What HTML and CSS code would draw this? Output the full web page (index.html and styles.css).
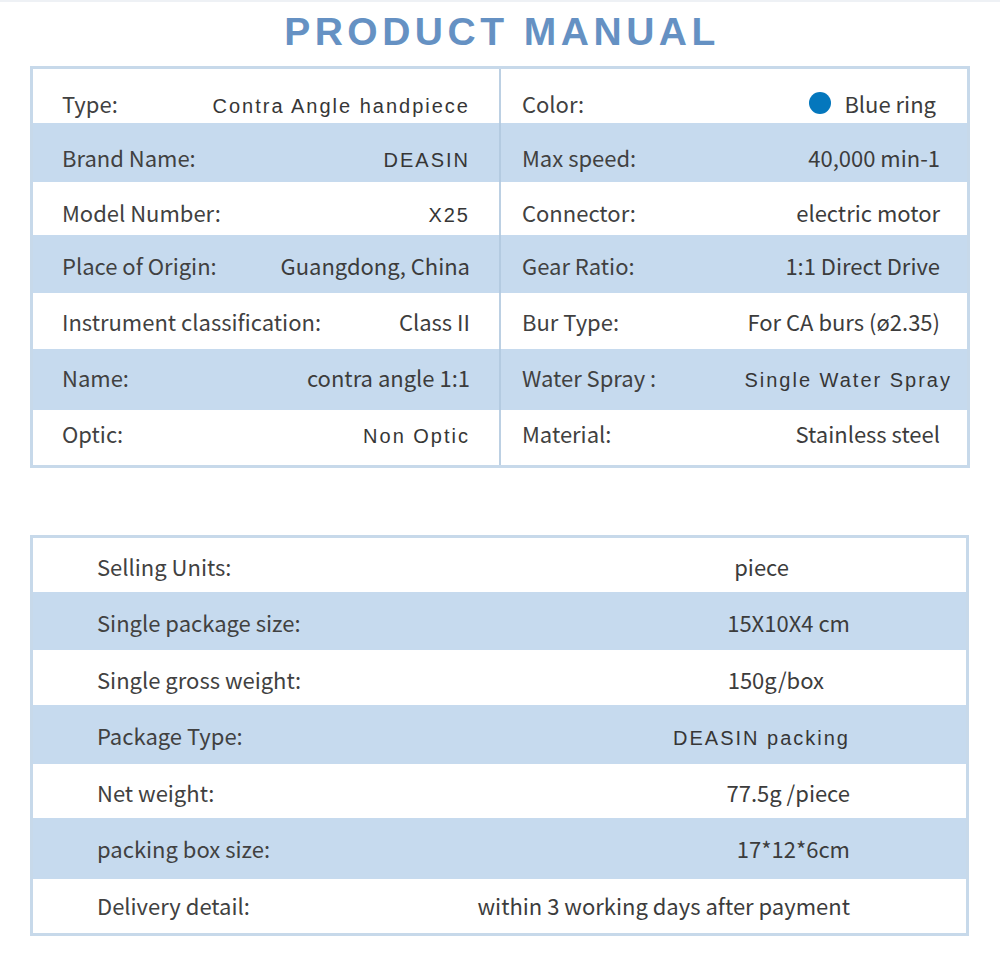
FILE: index.html
```html
<!DOCTYPE html>
<html lang="en">
<head>
<meta charset="utf-8">
<title>Product Manual</title>
<link rel="stylesheet" href="styles.css">
</head>
<body>
<h1 class="title">PRODUCT MANUAL</h1>

<div class="spec">
  <div class="row">
    <div class="cell"><span class="lbl">Type:</span><span class="val sp">Contra Angle handpiece</span></div>
    <div class="cell"><span class="lbl">Color:</span><span class="val in"><span class="dot"></span>Blue ring</span></div>
  </div>
  <div class="row">
    <div class="cell"><span class="lbl">Brand Name:</span><span class="val sp">DEASIN</span></div>
    <div class="cell"><span class="lbl">Max speed:</span><span class="val">40,000 min-1</span></div>
  </div>
  <div class="row">
    <div class="cell"><span class="lbl">Model Number:</span><span class="val sp">X25</span></div>
    <div class="cell"><span class="lbl">Connector:</span><span class="val">electric motor</span></div>
  </div>
  <div class="row">
    <div class="cell"><span class="lbl">Place of Origin:</span><span class="val">Guangdong, China</span></div>
    <div class="cell"><span class="lbl">Gear Ratio:</span><span class="val">1:1 Direct Drive</span></div>
  </div>
  <div class="row">
    <div class="cell"><span class="lbl">Instrument classification:</span><span class="val">Class II</span></div>
    <div class="cell"><span class="lbl">Bur Type:</span><span class="val">For CA burs (ø2.35)</span></div>
  </div>
  <div class="row">
    <div class="cell"><span class="lbl">Name:</span><span class="val">contra angle 1:1</span></div>
    <div class="cell"><span class="lbl">Water Spray :</span><span class="val sp out">Single Water Spray</span></div>
  </div>
  <div class="row">
    <div class="cell"><span class="lbl">Optic:</span><span class="val sp">Non Optic</span></div>
    <div class="cell"><span class="lbl">Material:</span><span class="val">Stainless steel</span></div>
  </div>
</div>

<div class="pack">
  <div class="prow"><span class="lbl">Selling Units:</span><span class="val shift-l">piece</span></div>
  <div class="prow"><span class="lbl">Single package size:</span><span class="val">15X10X4 cm</span></div>
  <div class="prow"><span class="lbl">Single gross weight:</span><span class="val shift-s">150g/box</span></div>
  <div class="prow"><span class="lbl">Package Type:</span><span class="val sp">DEASIN packing</span></div>
  <div class="prow"><span class="lbl">Net weight:</span><span class="val">77.5g /piece</span></div>
  <div class="prow"><span class="lbl">packing box size:</span><span class="val">17*12*6cm</span></div>
  <div class="prow"><span class="lbl">Delivery detail:</span><span class="val">within 3 working days after payment</span></div>
</div>
</body>
</html>
```

FILE: styles.css
```css
* { box-sizing: border-box; }

html, body {
  margin: 0;
  padding: 0;
  background: #ffffff;
}

body {
  width: 1000px;
  border-top: 2px solid #eef1f5;
  font-family: "Noto Sans CJK SC", "Noto Sans", sans-serif;
  font-size: 22px;
  line-height: 1;
  color: #414141;
}

.title {
  margin: 0;
  height: 64px;
  display: flex;
  align-items: center;
  justify-content: center;
  padding-left: 4px;
  padding-bottom: 6px;
  font-family: "Liberation Sans", Arial, sans-serif;
  font-weight: bold;
  font-size: 39px;
  letter-spacing: 4.5px;
  color: #6591c3;
}

/* ---------- top specification table ---------- */
.spec {
  margin: 0 30px;
  width: 940px;
  border: 3px solid #c7d9ea;
}

.row {
  display: grid;
  grid-template-columns: 468px 466px;
}

.row:nth-child(even) { background: #c6daee; }

.cell {
  display: flex;
  justify-content: space-between;
  align-items: baseline;
  white-space: nowrap;
}

.cell:first-child {
  border-right: 2px solid #bcd0e3;
  padding-left: 29px;
  padding-right: 29px;
}

.row:nth-child(even) .cell:first-child { border-right-color: #b4cbe1; }

.cell:last-child {
  padding-left: 21px;
  padding-right: 27px;
}

.row:nth-child(1) { height: 54px; }
.row:nth-child(2) { height: 59px; }
.row:nth-child(3) { height: 53px; }
.row:nth-child(4) { height: 58px; }
.row:nth-child(5) { height: 56px; }
.row:nth-child(6) { height: 61px; }
.row:nth-child(7) { height: 55px; }

.row:nth-child(1) .cell { padding-top: 23px; }
.row:nth-child(2) .cell { padding-top: 23px; }
.row:nth-child(3) .cell { padding-top: 19px; }
.row:nth-child(4) .cell { padding-top: 19px; }
.row:nth-child(5) .cell { padding-top: 17px; }
.row:nth-child(6) .cell { padding-top: 17px; }
.row:nth-child(7) .cell { padding-top: 12px; }

.val { color: #3c3c3c; }

.val.sp {
  font-family: "Liberation Sans", Arial, sans-serif;
  font-size: 20px;
  letter-spacing: 2px;
  color: #363636;
}

.val.in { margin-right: 4px; }
.val.out { margin-right: -12px; }

.dot {
  display: inline-block;
  width: 22px;
  height: 22px;
  border-radius: 50%;
  background: #0477bd;
  margin-right: 13px;
  vertical-align: -1px;
}

/* ---------- packaging table ---------- */
.pack {
  margin: 67px 0 0 30px;
  width: 939px;
  border: 3px solid #c7d9ea;
}

.prow {
  display: flex;
  justify-content: space-between;
  align-items: baseline;
  padding-left: 64px;
  padding-right: 116px;
  white-space: nowrap;
}

.prow:nth-child(even) { background: #c6daee; }

.prow:nth-child(1) { height: 54px; padding-top: 17px; }
.prow:nth-child(2) { height: 58px; padding-top: 19px; }
.prow:nth-child(3) { height: 55px; padding-top: 18px; }
.prow:nth-child(4) { height: 59px; padding-top: 19px; }
.prow:nth-child(5) { height: 54px; padding-top: 17px; }
.prow:nth-child(6) { height: 61px; padding-top: 19px; }
.prow:nth-child(7) { height: 54px; padding-top: 15px; }

.prow .val.shift-l { margin-right: 61px; }
.prow .val.shift-s { margin-right: 26px; }
```
